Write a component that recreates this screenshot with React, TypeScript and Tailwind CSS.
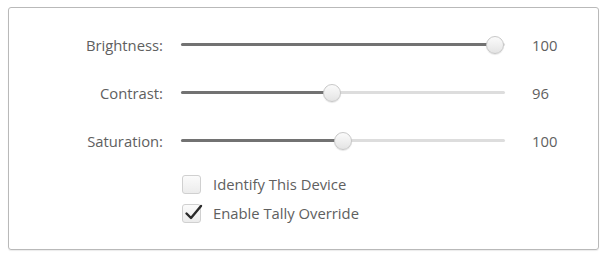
import * as React from 'react'

interface SliderRowProps {
  label: string
  value: number
  percent: number
}

const SliderRow: React.FC<SliderRowProps> = ({ label, value, percent }) => {
  return (
    <div className="flex h-[48px] items-center">
      <div className="w-[154px] text-right text-[14.8px] text-[#606060]">{label}</div>
      <div className="relative ml-[18px] h-[18px] w-[324px]">
        <div className="absolute top-[7px] left-0 right-0 h-[3px] rounded-full bg-[#dddddd]" />
        <div
          className="absolute top-[7px] left-0 h-[3px] rounded-full bg-[#727272]"
          style={{ width: `${percent}%` }}
        />
        <div
          className="absolute top-0 h-[18px] w-[18px] -translate-x-1/2 rounded-full border border-[#c8c8c8] bg-gradient-to-b from-[#fbfbfb] to-[#e4e4e4] shadow-[0_1px_1px_rgba(0,0,0,0.1)]"
          style={{ left: `${percent}%` }}
        />
      </div>
      <div className="ml-[27px] text-[14.8px] text-[#606060]">{value}</div>
    </div>
  )
}

interface CheckRowProps {
  label: string
  checked: boolean
}

const CheckRow: React.FC<CheckRowProps> = ({ label, checked }) => {
  return (
    <div className="flex h-[29px] items-center pl-[173px]">
      <div className="relative h-[19px] w-[19px] rounded-[3px] border border-[#d0d0d0] bg-gradient-to-b from-[#fbfbfb] to-[#ececec]">
        {checked && (
          <svg
            className="absolute top-[-1px] left-[1px]"
            width="19"
            height="17"
            viewBox="0 0 19 17"
          >
            <path
              d="M2.5 9.5 L7 14 L17 2"
              fill="none"
              stroke="#2a2a2a"
              strokeWidth="2.4"
              strokeLinecap="round"
              strokeLinejoin="round"
            />
          </svg>
        )}
      </div>
      <span className="ml-[12px] text-[14.8px] text-[#606060]">{label}</span>
    </div>
  )
}

export default function App() {
  return (
    <div
      className="h-[254px] w-[603px] bg-white pt-[7px] pl-[8px]"
      style={{ fontFamily: '"Open Sans", "Noto Sans", sans-serif' }}
    >
      <div className="h-[243px] w-[591px] rounded-[3px] border border-[#b9b9b9] pt-[13px] shadow-[0_1px_1px_rgba(0,0,0,0.08)]">
        <SliderRow label="Brightness:" value={100} percent={97} />
        <SliderRow label="Contrast:" value={96} percent={46.5} />
        <SliderRow label="Saturation:" value={100} percent={50} />
        <div className="mt-[5px]">
          <CheckRow label="Identify This Device" checked={false} />
          <CheckRow label="Enable Tally Override" checked />
        </div>
      </div>
    </div>
  )
}
